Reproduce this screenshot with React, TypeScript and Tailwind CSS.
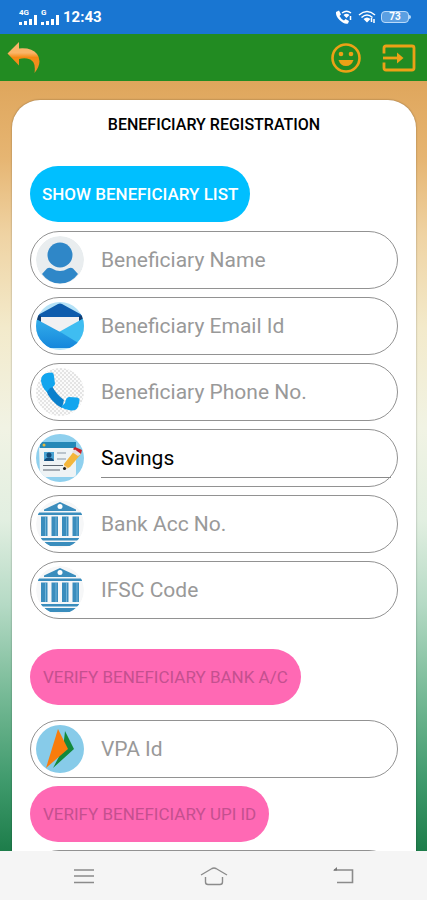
import type { ReactNode } from 'react'

interface FieldProps {
  id: string
  label: string
  icon: ReactNode
  type?: string
}

/** Rounded outline shared by all the inputs */
const FieldShell = ({
  icon,
  children,
}: {
  icon: ReactNode
  children: ReactNode
}) => (
  <div className="flex h-[58px] items-center gap-[17px] rounded-full border border-[#929292] pl-[5px] pr-[6px]">
    <span className="size-12 shrink-0 overflow-hidden rounded-full">{icon}</span>
    {children}
  </div>
)

const Field = ({ id, label, icon, type = 'text' }: FieldProps) => (
  <FieldShell icon={icon}>
    <input
      id={id}
      type={type}
      aria-label={label}
      placeholder={label}
      className="w-full min-w-0 bg-transparent pt-[2px] text-[21px] text-black outline-none placeholder:text-[#999999]"
    />
  </FieldShell>
)

const PersonIcon = () => (
  <svg viewBox="0 0 48 48" className="size-full">
    <circle cx="24" cy="24" r="24" fill="#e9edef" />
    <circle cx="24" cy="19" r="12.5" fill="#2f87c8" />
    <path
      d="M6 38 L11 32.5 Q13 31 16 32.5 Q24 37.5 32 32.5 Q35 31 37 32.5 L42 38 Q35 47.5 24 47.5 Q13 47.5 6 38Z"
      fill="#2f87c8"
    />
  </svg>
)

const MailIcon = () => (
  <svg viewBox="0 0 48 48" className="size-full">
    <defs>
      <linearGradient id="envelope" x1="0" y1="0" x2="0" y2="1">
        <stop offset="0" stopColor="#33aeea" />
        <stop offset="1" stopColor="#1687dc" />
      </linearGradient>
    </defs>
    <rect width="48" height="48" fill="#b4e2f7" />
    <path d="M2 13 L22 2 Q24 1 26 2 L46 13 V24 H2Z" fill="#0d5cac" />
    <path d="M5 15 H43 V24 L24 34 L5 24Z" fill="#f1f1f2" />
    <path d="M1 13 L5 14 V19 L1 18Z M47 13 L43 14 V19 L47 18Z" fill="#123f73" />
    <path d="M48 16 L23 30 L42 45 L48 38Z" fill="#3fbdf1" />
    <path d="M0 17 L26 31 L44 42 L36 46 H12 L0 34Z" fill="url(#envelope)" />
  </svg>
)

const PhoneIcon = () => (
  <svg viewBox="0 0 48 48" className="size-full">
    <defs>
      <pattern id="checks" width="4" height="4" patternUnits="userSpaceOnUse">
        <rect width="4" height="4" fill="#fbfbfb" />
        <rect width="2" height="2" fill="#e4e4e4" />
        <rect x="2" y="2" width="2" height="2" fill="#e4e4e4" />
      </pattern>
    </defs>
    <rect width="48" height="48" fill="url(#checks)" />
    <path d="M9 20 L16 18 Q20 26 28 32 L26 40 Q14 34 9 20Z" fill="#0a80cc" />
    <path
      d="M5 13 Q5 6 11 5 L16 4.500 Q18 5 18 8 L19 16 Q18 19 14 20 L11 24 Q6 20 5 13Z"
      fill="#12a5ee"
    />
    <path
      d="M25 39 L29 35 Q30 29 33 29 L41 29.500 Q44 30 43.500 33 L42 39 Q40 43 35 42.500 Q29 42 25 39Z"
      fill="#12a5ee"
    />
  </svg>
)

const AccountIcon = () => (
  <svg viewBox="0 0 48 48" className="size-full">
    <rect width="48" height="48" fill="#8fd0ee" />
    <rect x="4" y="8" width="36" height="6" fill="#2488b7" />
    <circle cx="8" cy="11" r="1.500" fill="#e9b93b" />
    <path d="M3 14 H40 V40 Q40 43 37 43 H7 Q4 43 4 40Z" fill="#eef3f5" />
    <rect x="8" y="18" width="10" height="9" fill="#4aa3d3" />
    <circle cx="13" cy="21" r="2.500" fill="#154c79" />
    <path d="M8 27 Q9 23.500 13 23.500 Q17 23.500 18 27Z" fill="#154c79" />
    <path d="M21 19 H30 M21 25 H30" stroke="#a9b5bf" strokeWidth="1.500" />
    <path d="M7 31.500 H27 M7 36 H24" stroke="#5b6570" strokeWidth="1.200" />
    <path d="M28 30 L39 16 L45 20 L34 33 L28 36Z" fill="#f4b63a" />
    <path d="M37 15 L39 13 L46 16 L45 20 L42 20Z" fill="#c62128" />
    <path d="M36 18 L39 15.500 L45 20 L42 22Z" fill="#e6dfe0" />
    <path d="M28 31 L32 34 L28 36Z" fill="#f3dcbb" />
    <circle cx="28.500" cy="34.500" r="1.500" fill="#1d1d1d" />
  </svg>
)

const BankIcon = () => (
  <svg viewBox="0 0 48 48" className="size-full">
    <circle cx="24" cy="24" r="24" fill="#f6f7f8" />
    <g fill="#3a8dbd">
      <path d="M24 2 L40 9.500 V11 H8 V9.500Z" />
      <rect x="2" y="12.500" width="44" height="2.500" />
      <rect x="5" y="16.500" width="6.500" height="19.500" />
      <rect x="15.500" y="16.500" width="6.500" height="19.500" />
      <rect x="26" y="16.500" width="6.500" height="19.500" />
      <rect x="36.500" y="16.500" width="6.500" height="19.500" />
      <rect x="5" y="38" width="38" height="2.500" />
      <path d="M8 42 H41 L36 46 H13Z" />
    </g>
    <path
      d="M9.500 17 V36 M20 17 V36 M30.500 17 V36 M41 17 V36"
      stroke="#6fb3d8"
    />
    <circle cx="24" cy="6.500" r="2.500" fill="#fff" />
  </svg>
)

const UpiIcon = () => (
  <svg viewBox="0 0 48 48" className="size-full">
    <rect width="48" height="48" fill="#87cbe9" />
    <path d="M29 6 L38 24 L17 43 L27 24Z" fill="#13893c" />
    <path d="M22 4 L32 24 L10 43Z" fill="#f97c0c" />
  </svg>
)

/** Signal bars with the network type above them */
const Signal = ({ network }: { network: string }) => (
  <span className="relative flex h-4 w-[18px] items-end gap-[2px] text-white">
    <span className="absolute left-0 top-0 text-[8px] leading-[8px] font-bold">
      {network}
    </span>
    <span className="h-[3px] w-[3px] bg-current" />
    <span className="h-1 w-[3px] bg-current" />
    <span className="h-[6px] w-[3px] bg-current" />
    <span className="h-[10px] w-[3px] bg-current" />
  </span>
)

const StatusBar = () => (
  <div className="flex h-[34px] shrink-0 items-center justify-between bg-[#1976d2] pl-[19px] pr-4 text-white">
    <div className="flex items-center gap-1">
      <Signal network="4G" />
      <Signal network="G" />
      <span className="text-[15px] leading-5 font-bold">12:43</span>
    </div>
    <div className="flex items-center gap-[5px]">
      <svg viewBox="0 0 18 16" className="h-4 w-[18px]" fill="none">
        <path
          d="M1 3 L4 1.500 L6 5.500 L4.500 7 Q6 10 9 11.500 L10.500 10 L14 12 L13 14.500 Q9 15.500 4.500 11 Q0.500 7 1 3Z"
          fill="#fff"
        />
        <path d="M7 4 Q11.500 0.500 16 4" stroke="#fff" strokeWidth="1.500" />
        <path d="M8.500 6 Q11.500 3.500 14.500 6 L11.500 9Z" fill="#fff" />
        <path d="M15.500 7 V11" stroke="#fff" strokeWidth="1.500" />
      </svg>
      <svg viewBox="0 0 18 14" className="h-[14px] w-[18px]" fill="none">
        <path
          d="M1 5 Q9 -2 17 5 M3.500 7.500 Q9 2.500 14.500 7.500"
          stroke="#fff"
          strokeWidth="1.500"
        />
        <path d="M5.500 9 Q9 6 12.500 9 L9 12.500Z" fill="#fff" />
        <path d="M13.500 8 V12 M16 9 V13" stroke="#fff" strokeWidth="1.500" />
      </svg>
      <span className="flex items-center">
        <span className="flex h-3 w-[28px] items-center justify-center rounded-[4px] border border-[#b9dafa] bg-[#5b9fe2] text-[10px] leading-[10px] font-bold">
          73
        </span>
        <span className="h-1 w-[2px] rounded-r bg-[#b9dafa]" />
      </span>
    </div>
  </div>
)

const AppBar = () => (
  <header className="flex h-[47px] shrink-0 items-center justify-between bg-[#228b22] pl-[7px] pr-[11px]">
    <button type="button" aria-label="Back">
      <svg viewBox="0 0 34 34" className="size-[34px]">
        <defs>
          <linearGradient id="arrow" x1="0" y1="0" x2="0" y2="1">
            <stop offset="0.350" stopColor="#fbb568" />
            <stop offset="0.500" stopColor="#f58a14" />
            <stop offset="1" stopColor="#e9902a" />
          </linearGradient>
        </defs>
        <path
          d="M0.500 12.500 L12 1 V7.500 Q25 6.500 30 13 Q36 21 27.500 32 Q29.500 19 20 17.500 Q16 17 12 18 V24.500Z"
          fill="url(#arrow)"
        />
      </svg>
    </button>
    <div className="flex items-center gap-5">
      <button type="button" aria-label="Profile">
        <svg viewBox="0 0 32 32" className="size-8" fill="none">
          <circle cx="16" cy="16" r="13.500" stroke="#eda116" strokeWidth="2.600" />
          <circle cx="11" cy="12" r="2.300" fill="#eda116" />
          <circle cx="21" cy="12" r="2.300" fill="#eda116" />
          <path d="M8.500 18 H23.500 Q21.500 24 16 24 Q10.500 24 8.500 18Z" fill="#eda116" />
        </svg>
      </button>
      <button type="button" aria-label="Log out">
        <svg viewBox="0 0 34 28" className="h-7 w-[34px]" fill="none">
          <path
            d="M2 9.500 V4 Q2 2 4 2 H30 Q32 2 32 4 V24 Q32 26 30 26 H4 Q2 26 2 24 V18.500"
            stroke="#eda116"
            strokeWidth="2.800"
          />
          <path d="M1 14 H17" stroke="#eda116" strokeWidth="2.800" />
          <path d="M15 8.500 L21.500 14 L15 19.500Z" fill="#eda116" />
        </svg>
      </button>
    </div>
  </header>
)

const NavBar = () => (
  <nav className="flex h-[49px] shrink-0 items-center justify-between bg-[#f5f5f5] px-[70px]">
    <button type="button" aria-label="Recent apps">
      <svg viewBox="0 0 28 20" className="h-5 w-7" fill="none" stroke="#8b8b8b" strokeWidth="1.600">
        <path d="M4 4 H24 M4 10 H24 M4 16.500 H24" />
      </svg>
    </button>
    <button type="button" aria-label="Home">
      <svg viewBox="0 0 28 20" className="h-5 w-7" fill="none" stroke="#8b8b8b" strokeWidth="1.400">
        <path d="M1 9 L12 2.500 Q14 1.500 16 2.500 L27 9" />
        <path d="M5.500 11 V16 Q5.500 18.500 8 18.500 H20 Q22.500 18.500 22.500 16 V11" />
      </svg>
    </button>
    <button type="button" aria-label="Go back">
      <svg viewBox="0 0 28 20" className="h-5 w-7" fill="none" stroke="#8b8b8b" strokeWidth="1.600">
        <path d="M5 4 H23.500 V16.500 H8" />
        <path d="M8 1 L4 4.500 H8Z" fill="#777" stroke="none" />
      </svg>
    </button>
  </nav>
)

const VERIFY_BUTTON =
  'h-14 self-start rounded-full bg-[#ff69b4] px-[13px] pt-[2px] text-[17px] text-[#c4508f]'

const App = () => (
  <div className="flex h-screen flex-col overflow-hidden font-['Roboto',sans-serif]">
    <StatusBar />
    <AppBar />

    <main className="min-h-0 flex-1 overflow-hidden bg-[linear-gradient(to_bottom,#dfa65c_0%,#e6b572_10%,#efd3a3_20%,#f3eacb_32%,#f1f3e4_45%,#e2efe1_57%,#b5dac5_68%,#75b995_80%,#3f9a6c_91%,#1d7d4a_100%)] pt-[19px] pr-[11px] pl-3">
      <form className="flex flex-col rounded-t-[28px] bg-white px-[18px] pt-[15px] shadow-[0_0_2px_rgba(0,0,0,0.4)]">
        <h1 className="text-center text-[16px] leading-5 font-medium text-black">
          BENEFICIARY REGISTRATION
        </h1>

        <button
          type="button"
          className="mt-[31px] h-14 self-start rounded-full bg-[#00bfff] px-3 pt-[2px] text-[17px] font-medium text-white"
        >
          SHOW BENEFICIARY LIST
        </button>

        <div className="mt-[9px] flex flex-col gap-2">
          <Field id="name" label="Beneficiary Name" icon={<PersonIcon />} />
          <Field id="email" label="Beneficiary Email Id" icon={<MailIcon />} type="email" />
          <Field id="phone" label="Beneficiary Phone No." icon={<PhoneIcon />} type="tel" />
          <FieldShell icon={<AccountIcon />}>
            <select
              aria-label="Account type"
              defaultValue="Savings"
              className="h-10 w-full min-w-0 appearance-none border-b border-[#8a8a8a] bg-transparent pt-[2px] text-[21px] text-black outline-none"
            >
              <option>Savings</option>
              <option>Current</option>
            </select>
          </FieldShell>
          <Field id="account" label="Bank Acc No." icon={<BankIcon />} />
          <Field id="ifsc" label="IFSC Code" icon={<BankIcon />} />
        </div>

        <button type="button" disabled className={`mt-[30px] ${VERIFY_BUTTON}`}>
          VERIFY BENEFICIARY BANK A/C
        </button>

        <div className="mt-[15px] flex flex-col gap-2">
          <Field id="vpa" label="VPA Id" icon={<UpiIcon />} />
          <button type="button" disabled className={VERIFY_BUTTON}>
            VERIFY BENEFICIARY UPI ID
          </button>
          <Field id="amount" label="Amount" icon={<BankIcon />} />
        </div>
      </form>
    </main>

    <NavBar />
  </div>
)

export default App
